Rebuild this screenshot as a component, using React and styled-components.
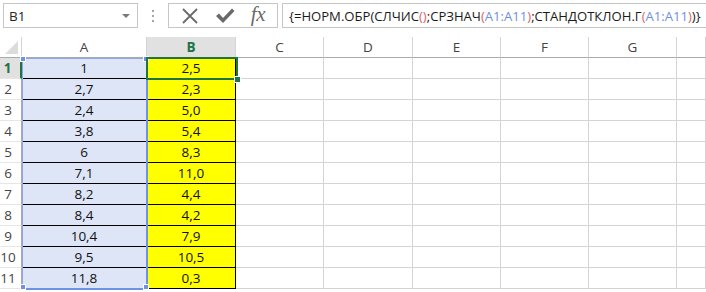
import React from 'react';
import styled, { createGlobalStyle } from 'styled-components';

const GlobalStyle = createGlobalStyle`
  html, body {
    margin: 0;
    padding: 0;
    background: #ffffff;
    font-family: "Open Sans", "Liberation Sans", sans-serif;
  }
`;

const Page = styled.div`
  width: 706px;
  height: 292px;
  overflow: hidden;
  background: #fff;
`;

const Toolbar = styled.div`
  display: flex;
  align-items: flex-start;
  height: 37px;
  padding: 3px 0 0 3px;
  box-sizing: border-box;
`;

const NameBox = styled.div`
  width: 135px;
  height: 25px;
  box-sizing: border-box;
  border: 1px solid #c6c6c6;
  display: flex;
  align-items: center;
  justify-content: space-between;
  padding: 0 7px 0 5px;
  font-size: 13.5px;
  color: #262626;
`;

const DropArrow = styled.span`
  width: 0;
  height: 0;
  border-left: 4px solid transparent;
  border-right: 4px solid transparent;
  border-top: 4px solid #7a7a7a;
`;

const Grip = styled.div`
  width: 30px;
  height: 25px;
  display: flex;
  flex-direction: column;
  align-items: center;
  justify-content: center;
  gap: 3px;
`;

const GripDot = styled.span`
  width: 2px;
  height: 2px;
  background: #a6a6a6;
`;

const ButtonsBox = styled.div`
  width: 110px;
  height: 25px;
  box-sizing: border-box;
  border: 1px solid #c6c6c6;
  display: flex;
  align-items: center;
  justify-content: space-around;
  padding: 0 4px;
`;

const Fx = styled.span`
  font-family: "Liberation Serif", "DejaVu Serif", serif;
  font-style: italic;
  font-size: 21px;
  color: #6a6a6a;
  letter-spacing: -0.5px;
  line-height: 1;
  margin-top: -3px;
`;

const FormulaBox = styled.div`
  flex: 1;
  height: 25px;
  box-sizing: border-box;
  border: 1px solid #c6c6c6;
  border-right: none;
  margin-left: 4px;
  display: flex;
  align-items: center;
  padding-left: 6px;
  font-size: 13.1px;
  color: #1a1a1a;
  white-space: nowrap;
  overflow: hidden;
`;

const Ref = styled.span`
  color: ${p => (p.$kind === 'range' ? '#6f8fe0' : '#e0606a')};
`;

const SheetWrap = styled.div`
  position: relative;
`;

const Sheet = styled.div`
  display: grid;
  grid-template-columns: 22px 125px 89px 88px 89px 88px 88px 88px 1fr;
  grid-auto-rows: 21px;
`;

const Corner = styled.div`
  box-sizing: border-box;
  border-right: 1px solid #d4d4d4;
  border-bottom: 1px solid #ababab;
  display: flex;
  align-items: flex-end;
  justify-content: flex-end;
  padding: 0 3px 3px 0;
`;

const CornerTriangle = styled.span`
  width: 0;
  height: 0;
  border-left: 13px solid transparent;
  border-bottom: 13px solid #dcdcdc;
`;

const ColHead = styled.div`
  box-sizing: border-box;
  border-right: 1px solid #d4d4d4;
  border-bottom: 1px solid ${p => (p.$active ? '#217346' : '#ababab')};
  background: ${p => (p.$active ? '#e1e1e1' : '#fff')};
  color: ${p => (p.$active ? '#217346' : '#444')};
  font-weight: ${p => (p.$active ? 700 : 400)};
  font-size: 13.5px;
  display: flex;
  align-items: center;
  justify-content: center;
`;

const RowHead = styled.div`
  box-sizing: border-box;
  border-right: ${p => (p.$active ? '2px solid #217346' : '1px solid #ababab')};
  border-bottom: 1px solid #e6e6e6;
  background: ${p => (p.$active ? '#e1e1e1' : '#fff')};
  color: ${p => (p.$active ? '#217346' : '#444')};
  font-weight: ${p => (p.$active ? 700 : 400)};
  font-size: 13.5px;
  display: flex;
  align-items: center;
  justify-content: center;
  padding-right: 5px;
`;

const fills = {
  a: '#dde5f7',
  b: '#ffff00',
  plain: '#fff',
};

const Cell = styled.div`
  box-sizing: border-box;
  background: ${p => fills[p.$kind]};
  border-right: 1px solid ${p => (p.$kind === 'b' ? '#000' : '#d4d4d4')};
  border-bottom: 1px solid ${p => (p.$kind === 'plain' ? '#d4d4d4' : '#000')};
  font-size: 13.5px;
  color: #111;
  display: flex;
  align-items: center;
  justify-content: center;
`;

const RangeBox = styled.div`
  position: absolute;
  left: 22px;
  top: 21px;
  width: 126px;
  height: 232px;
  box-sizing: border-box;
  border-left: 1px solid #8aa8e6;
  border-top: 1px solid #8aa8e6;
  border-right: 2px solid #6d93e2;
  border-bottom: 2px solid #6d93e2;
  pointer-events: none;
`;

const Handle = styled.span`
  position: absolute;
  width: 4px;
  height: 4px;
  background: ${p => p.$color};
  border: 1px solid #fff;
  left: ${p => p.$x}px;
  top: ${p => p.$y}px;
`;

const Selection = styled.div`
  position: absolute;
  left: 146px;
  top: 20px;
  width: 92px;
  height: 23px;
  box-sizing: border-box;
  border: 2px solid #217346;
  pointer-events: none;
`;

const FillHandle = styled.span`
  position: absolute;
  right: -5px;
  bottom: -5px;
  width: 5px;
  height: 5px;
  background: #217346;
  border: 1px solid #fff;
`;

const cols = ['A', 'B', 'C', 'D', 'E', 'F', 'G', ''];
const rows = [
  ['1', '2,5'],
  ['2,7', '2,3'],
  ['2,4', '5,0'],
  ['3,8', '5,4'],
  ['6', '8,3'],
  ['7,1', '11,0'],
  ['8,2', '4,4'],
  ['8,4', '4,2'],
  ['10,4', '7,9'],
  ['9,5', '10,5'],
  ['11,8', '0,3'],
];

const CrossIcon = () => (
  <svg width="18" height="18" viewBox="0 0 18 18">
    <path d="M2 2 L16 16 M16 2 L2 16" stroke="#6a6a6a" strokeWidth="1.8" fill="none" />
  </svg>
);

const CheckIcon = () => (
  <svg width="20" height="18" viewBox="0 0 20 18">
    <path d="M1 9 L4 6.5 L8 11 L17 1.5 L19.5 4 L8 16 Z" fill="#6a6a6a" />
  </svg>
);

export default function App() {
  return (
    <Page>
      <GlobalStyle />
      <Toolbar>
        <NameBox>
          <span>B1</span>
          <DropArrow />
        </NameBox>
        <Grip>
          <GripDot />
          <GripDot />
          <GripDot />
        </Grip>
        <ButtonsBox>
          <CrossIcon />
          <CheckIcon />
          <Fx>fx</Fx>
        </ButtonsBox>
        <FormulaBox>
          {'{=НОРМ.ОБР(СЛЧИС'}
          <Ref>()</Ref>
          {';СРЗНАЧ'}
          <Ref>(</Ref>
          <Ref $kind="range">A1:A11</Ref>
          <Ref>)</Ref>
          {';СТАНДОТКЛОН.Г'}
          <Ref>(</Ref>
          <Ref $kind="range">A1:A11</Ref>
          <Ref>)</Ref>
          {')}'}
        </FormulaBox>
      </Toolbar>
      <SheetWrap>
        <Sheet>
          <Corner>
            <CornerTriangle />
          </Corner>
          {cols.map((c, i) => (
            <ColHead key={i} $active={c === 'B'}>
              {c}
            </ColHead>
          ))}
          {rows.map((r, i) => (
            <React.Fragment key={i}>
              <RowHead $active={i === 0}>{i + 1}</RowHead>
              <Cell $kind="a">{r[0]}</Cell>
              <Cell $kind="b">{r[1]}</Cell>
              {[0, 1, 2, 3, 4, 5].map(k => (
                <Cell key={k} $kind="plain" />
              ))}
            </React.Fragment>
          ))}
        </Sheet>
        <RangeBox>
          <Handle $color="#6d93e2" $x={-3} $y={-3} />
          <Handle $color="#6d93e2" $x={120} $y={-3} />
          <Handle $color="#6d93e2" $x={-3} $y={225} />
          <Handle $color="#6d93e2" $x={120} $y={225} />
        </RangeBox>
        <Selection>
          <FillHandle />
        </Selection>
      </SheetWrap>
    </Page>
  );
}
